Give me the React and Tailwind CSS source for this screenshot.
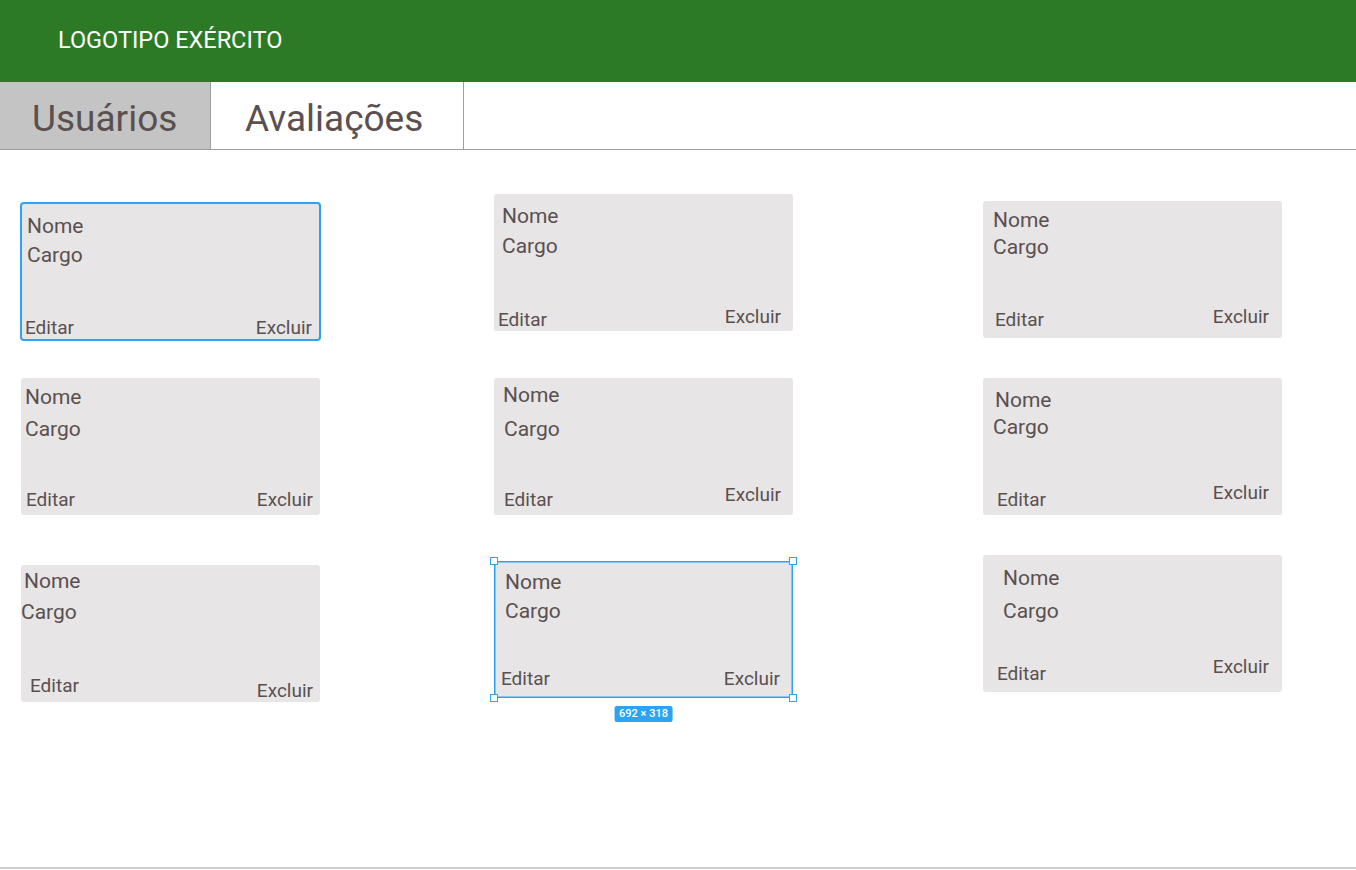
import React from "react";

const font = { fontFamily: "Roboto, 'Noto Sans', sans-serif" };

// each column of cards, top to bottom; offsets copied from the wireframe
const columns = [
  {
    col: "ml-[21px]",
    cards: [
      {
        box: "mt-[52px] h-[139px] -ml-[1px] w-[301px] rounded-[4px] ring-2 ring-inset ring-[#2ea3f2]",
        nome: "mt-[12px] ml-[7px]",
        cargo: "mt-[5px] ml-[7px]",
        editar: "ml-[5px] mb-[2px]",
        excluir: "mr-[9px] mb-[2px]",
      },
      {
        box: "mt-[37px] rounded-[3px]",
        nome: "mt-[7px] ml-[4px]",
        cargo: "mt-[8px] ml-[4px]",
        editar: "ml-[5px] mb-[4px]",
        excluir: "mr-[7px] mb-[4px]",
      },
      {
        box: "mt-[50px] rounded-[3px]",
        nome: "mt-[4px] ml-[3px]",
        cargo: "mt-[7px] ml-0",
        editar: "ml-[9px] mb-[5px]",
        excluir: "mr-[7px] mb-0",
      },
    ],
  },
  {
    col: "ml-[173px]",
    cards: [
      {
        box: "mt-[44px] rounded-[3px]",
        nome: "mt-[10px] ml-[8px]",
        cargo: "mt-[6px] ml-[8px]",
        editar: "ml-[4px] mb-0",
        excluir: "mr-[12px] mb-[3px]",
      },
      {
        box: "mt-[47px] rounded-[3px]",
        nome: "mt-[5px] ml-[9px]",
        cargo: "mt-[10px] ml-[10px]",
        editar: "ml-[10px] mb-[4px]",
        excluir: "mr-[12px] mb-[9px]",
      },
      {
        box: "mt-[46px] ring-[1.5px] ring-inset ring-[#2ea3f2]",
        nome: "mt-[9px] ml-[11px]",
        cargo: "mt-[5px] ml-[11px]",
        editar: "ml-[7px] mb-[8px]",
        excluir: "mr-[13px] mb-[8px]",
        selected: true,
      },
    ],
  },
  {
    col: "ml-[190px]",
    cards: [
      {
        box: "mt-[51px] rounded-[3px]",
        nome: "mt-[7px] ml-[10px]",
        cargo: "mt-[3px] ml-[10px]",
        editar: "ml-[12px] mb-[7px]",
        excluir: "mr-[13px] mb-[10px]",
      },
      {
        box: "mt-[40px] rounded-[3px]",
        nome: "mt-[10px] ml-[12px]",
        cargo: "mt-[3px] ml-[10px]",
        editar: "ml-[14px] mb-[4px]",
        excluir: "mr-[13px] mb-[11px]",
      },
      {
        box: "mt-[40px] rounded-[3px]",
        nome: "mt-[11px] ml-[20px]",
        cargo: "mt-[9px] ml-[20px]",
        editar: "ml-[14px] mb-[7px]",
        excluir: "mr-[13px] mb-[14px]",
      },
    ],
  },
];

const Handle = ({ pos }) => (
  <span
    className={`absolute w-[8px] h-[8px] bg-white border border-[#2ea3f2] ${pos}`}
  />
);

const UserCard = ({ card }) => (
  <div
    className={`relative flex flex-col w-[299px] h-[137px] bg-[#e7e5e6] text-[#5b5050] ${card.box}`}
  >
    <p className={`text-[21px] leading-[24px] ${card.nome}`}>Nome</p>
    <p className={`text-[21px] leading-[24px] ${card.cargo}`}>Cargo</p>
    <div className="mt-auto flex items-end justify-between text-[19px] leading-[22px]">
      <span className={card.editar}>Editar</span>
      <span className={card.excluir}>Excluir</span>
    </div>
    {card.selected && (
      <>
        <Handle pos="-left-[4px] -top-[4px]" />
        <Handle pos="-right-[4px] -top-[4px]" />
        <Handle pos="-left-[4px] -bottom-[4px]" />
        <Handle pos="-right-[4px] -bottom-[4px]" />
        <span className="absolute left-1/2 -translate-x-1/2 top-[145px] rounded-[2px] bg-[#2ea3f2] px-[5px] text-[11px] leading-[16px] font-medium text-white whitespace-nowrap">
          692 × 318
        </span>
      </>
    )}
  </div>
);

const App = () => {
  return (
    <div className="flex flex-col h-[870px] bg-white" style={font}>
      <header className="h-[82px] bg-[#2c7a26] flex items-center pl-[58px]">
        <span className="text-white text-[23.5px] leading-none">LOGOTIPO EXÉRCITO</span>
      </header>

      <nav className="flex h-[68px] border-b border-[#9e9e9e] text-[37px] text-[#5b5050]">
        <div className="w-[211px] bg-[#c4c4c4] border-r border-[#9e9e9e] flex items-center pl-[32px] pt-[6px]">
          Usuários
        </div>
        <div className="w-[253px] border-r border-[#9e9e9e] flex items-center pl-[34px] pt-[6px]">
          Avaliações
        </div>
      </nav>

      <main className="flex flex-1">
        {columns.map((column, i) => (
          <div key={i} className={`flex flex-col ${column.col}`}>
            {column.cards.map((card, j) => (
              <UserCard key={j} card={card} />
            ))}
          </div>
        ))}
      </main>

      <div className="h-[2px] bg-[#cfcfcf] mb-[1px]" />
    </div>
  );
};

export default App;
